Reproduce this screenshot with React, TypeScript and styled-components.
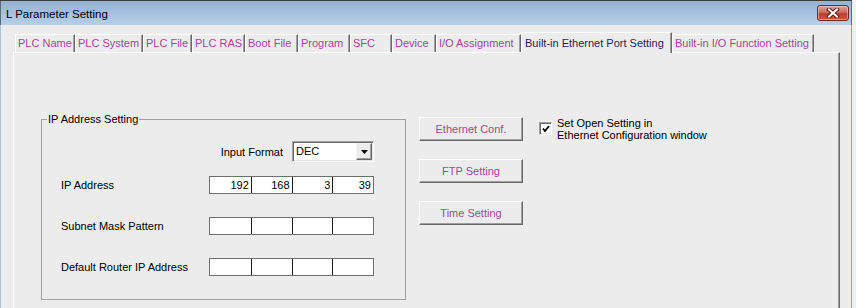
import React from 'react'
import styled, { createGlobalStyle } from 'styled-components'

const GlobalStyle = createGlobalStyle`
  html, body, #root {
    height: 100%;
  }
  body {
    margin: 0;
    overflow: hidden;
    background: #f0f0f0;
    font-family: 'Liberation Sans', Arial, sans-serif;
    font-size: 11px;
    color: #000;
  }
`

const tabs = [
  { label: 'PLC Name', width: 60 },
  { label: 'PLC System', width: 68 },
  { label: 'PLC File', width: 49 },
  { label: 'PLC RAS', width: 53 },
  { label: 'Boot File', width: 53 },
  { label: 'Program', width: 52 },
  { label: 'SFC', width: 42 },
  { label: 'Device', width: 44 },
  { label: 'I/O Assignment', width: 85 },
  { label: 'Built-in Ethernet Port Setting', width: 151, active: true },
  { label: 'Built-in I/O Function Setting', width: 142 }
]

const addressRows = [
  { label: 'IP Address', values: ['192', '168', '3', '39'] },
  { label: 'Subnet Mask Pattern', values: ['', '', '', ''] },
  { label: 'Default Router IP Address', values: ['', '', '', ''] }
]

// 主窗口
const App: React.FC = () => {
  return (
    <>
      <GlobalStyle />
      <Window>
        <TitleBar>
          <Title>L Parameter Setting</Title>
          <CloseButton>
            <svg width="14" height="10" viewBox="0 0 14 10">
              <path d="M3 1.5 L11 8.5 M11 1.5 L3 8.5" stroke="#5a1f1a" strokeWidth="4" strokeLinecap="square" />
              <path d="M3 1.5 L11 8.5 M11 1.5 L3 8.5" stroke="#ffffff" strokeWidth="2" strokeLinecap="square" />
            </svg>
          </CloseButton>
        </TitleBar>
        <Client>
          <TabStrip>
            {tabs.map((t) => (
              <Tab key={t.label} $width={t.width} $active={t.active}>
                {t.label}
              </Tab>
            ))}
          </TabStrip>
          <Panel>
            <ContentRow>
              <GroupBox>
                <Legend>IP Address Setting</Legend>
                <FormatRow>
                  <span>Input Format</span>
                  <Combo>
                    <ComboText>DEC</ComboText>
                    <ComboArrow>
                      <svg width="7" height="4" viewBox="0 0 7 4">
                        <path d="M0 0 H7 L3.5 4 Z" fill="#000" />
                      </svg>
                    </ComboArrow>
                  </Combo>
                </FormatRow>
                <AddressList>
                  {addressRows.map((r) => (
                    <AddressRow key={r.label}>
                      <span>{r.label}</span>
                      <IpField>
                        {r.values.map((v, i) => (
                          <IpCell key={i}>{v}</IpCell>
                        ))}
                      </IpField>
                    </AddressRow>
                  ))}
                </AddressList>
              </GroupBox>
              <ButtonColumn>
                <PushButton>Ethernet Conf.</PushButton>
                <PushButton>FTP Setting</PushButton>
                <PushButton>Time Setting</PushButton>
              </ButtonColumn>
              <CheckRow>
                <CheckBox>
                  <svg width="8" height="8" viewBox="0 0 8 8">
                    <path d="M1 3.5 L3 6 L7 1" stroke="#000" strokeWidth="1.8" fill="none" />
                  </svg>
                </CheckBox>
                <CheckLabel>
                  Set Open Setting in
                  <br />
                  Ethernet Configuration window
                </CheckLabel>
              </CheckRow>
            </ContentRow>
          </Panel>
        </Client>
      </Window>
    </>
  )
}

const Window = styled.div`
  width: 852px;
  height: 100%;
  display: flex;
  flex-direction: column;
  border-top: 1px solid #3b3f44;
  box-sizing: border-box;
`

const TitleBar = styled.div`
  height: 24px;
  flex: none;
  display: flex;
  align-items: center;
  justify-content: space-between;
  padding: 0 2px 0 5px;
  background: linear-gradient(to bottom, #93b1d2, #b7d0e9);
  border-left: 1px solid #5d6b78;
  border-right: 1px solid #5d6b78;
`

const Title = styled.div`
  font-size: 11.5px;
  color: #000;
  padding-top: 1px;
`

const CloseButton = styled.div`
  width: 32px;
  height: 16px;
  box-sizing: border-box;
  display: flex;
  align-items: center;
  justify-content: center;
  border: 1px solid #6b2a24;
  border-radius: 3px;
  background: linear-gradient(to bottom, #e3a29b 0%, #cf6a5f 45%, #bb3e31 55%, #c85a4a 100%);
  box-shadow: inset 0 0 0 1px rgba(255, 220, 215, 0.45);
`

const Client = styled.div`
  flex: 1;
  min-height: 0;
  display: flex;
  flex-direction: column;
  background: #ececec;
  padding: 7px 11px 0 12px;
  border-left: 1px solid #a9c4df;
  border-right: 1px solid #5cb6df;
`

const TabStrip = styled.div`
  height: 20px;
  display: flex;
  align-items: flex-end;
  padding-left: 2px;
  position: relative;
  z-index: 1;
`

const Tab = styled.div<{ $width: number; $active?: boolean }>`
  box-sizing: border-box;
  width: ${(p) => p.$width}px;
  height: ${(p) => (p.$active ? 21 : 18)}px;
  margin-bottom: ${(p) => (p.$active ? -1 : 0)}px;
  padding: ${(p) => (p.$active ? '4px 0 0 3px' : '2px 0 0 2px')};
  line-height: 13px;
  white-space: nowrap;
  background: #ececec;
  color: ${(p) => (p.$active ? '#1f1f5c' : '#a546a0')};
  border-top: 1px solid #fff;
  border-left: 1px solid #fff;
  border-right: 1px solid #696969;
  box-shadow: inset -1px 0 0 #a0a0a0;
`

const Panel = styled.div`
  flex: 1;
  min-height: 0;
  border-top: 1px solid #fff;
  border-left: 1px solid #fff;
  border-right: 1px solid #696969;
  box-shadow: inset -1px 0 0 #a0a0a0;
  padding: 64px 0 0 27px;
`

const ContentRow = styled.div`
  display: flex;
  align-items: flex-start;
`

const GroupBox = styled.div`
  position: relative;
  box-sizing: border-box;
  width: 365px;
  height: 181px;
  margin-top: 2px;
  border: 1px solid #a0a0a0;
  padding: 21px 0 0 19px;
`

const Legend = styled.div`
  position: absolute;
  top: -7px;
  left: 5px;
  padding: 0 1px;
  line-height: 13px;
  background: #ececec;
`

const FormatRow = styled.div`
  width: 313px;
  height: 21px;
  display: flex;
  align-items: center;
  justify-content: flex-end;
  gap: 9px;
`

const Combo = styled.div`
  box-sizing: border-box;
  width: 82px;
  height: 21px;
  display: flex;
  align-items: stretch;
  background: #fff;
  border: 1px solid;
  border-color: #a0a0a0 #fff #fff #a0a0a0;
  box-shadow: inset 1px 1px 0 #696969, inset -1px -1px 0 #e3e3e3;
  padding: 1px;
`

const ComboText = styled.div`
  flex: 1;
  padding-left: 2px;
  line-height: 17px;
`

const ComboArrow = styled.div`
  box-sizing: border-box;
  width: 16px;
  display: flex;
  align-items: center;
  justify-content: center;
  background: #ececec;
  border: 1px solid;
  border-color: #f4f4f4 #696969 #696969 #f4f4f4;
  box-shadow: inset -1px -1px 0 #a0a0a0;
`

const AddressList = styled.div`
  margin-top: 14px;
  display: flex;
  flex-direction: column;
  gap: 23px;
`

const AddressRow = styled.div`
  display: grid;
  grid-template-columns: 148px 165px;
  align-items: center;
`

const IpField = styled.div`
  box-sizing: border-box;
  height: 18px;
  display: grid;
  grid-template-columns: repeat(4, 1fr);
  background: #fff;
  border: 1px solid #6e6e6e;
  > div + div {
    border-left: 1px solid #1a1a1a;
  }
`

const IpCell = styled.div`
  text-align: right;
  padding-right: 2px;
  line-height: 16px;
`

const ButtonColumn = styled.div`
  margin-left: 13px;
  display: flex;
  flex-direction: column;
  gap: 18px;
`

const PushButton = styled.div`
  box-sizing: border-box;
  width: 104px;
  height: 24px;
  display: flex;
  align-items: center;
  justify-content: center;
  color: #a546a0;
  background: #ececec;
  border: 1px solid;
  border-color: #fff #696969 #696969 #fff;
  box-shadow: inset -1px -1px 0 #a0a0a0;
`

const CheckRow = styled.div`
  margin-left: 16px;
  display: flex;
  align-items: flex-start;
  gap: 5px;
`

const CheckBox = styled.div`
  box-sizing: border-box;
  width: 13px;
  height: 13px;
  margin-top: 5px;
  display: flex;
  align-items: center;
  justify-content: center;
  background: #fff;
  border: 1px solid;
  border-color: #a0a0a0 #fff #fff #a0a0a0;
  box-shadow: inset 1px 1px 0 #696969, inset -1px -1px 0 #e3e3e3;
`

const CheckLabel = styled.div`
  line-height: 12px;
`

export default App
